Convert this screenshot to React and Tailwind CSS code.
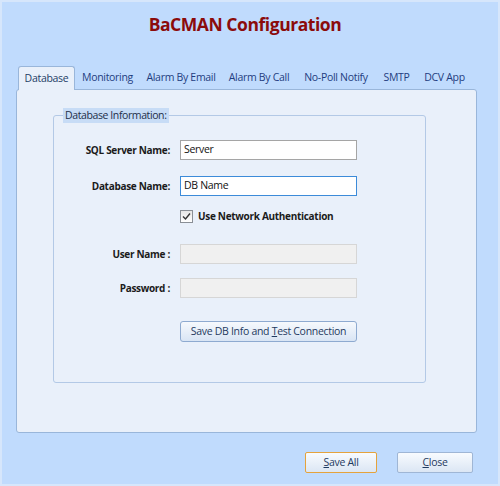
import React from 'react';

const font = { fontFamily: '"Open Sans", "Noto Sans", sans-serif' };

const tabs = [
  { label: 'Monitoring', w: 'w-[65px]' },
  { label: 'Alarm By Email', w: 'w-[82px]' },
  { label: 'Alarm By Call', w: 'w-[74px]' },
  { label: 'No-Poll Notify', w: 'w-[80px]' },
  { label: 'SMTP', w: 'w-[41px]' },
  { label: 'DCV App', w: 'w-[55px]' },
];

// Form row: right aligned label + field
const Row = ({ label, children, className = '' }) => (
  <div className={`flex items-center ${className}`}>
    <div className="w-[117px] pr-[1px] text-right text-[10px] font-bold text-[#1b1b1b] leading-none tracking-[-0.3px]">
      {label}
    </div>
    <div className="ml-[9px] w-[177px]">{children}</div>
  </div>
);

const TextBox = ({ value, focused, disabled }) => (
  <div
    className={`h-[20px] w-full flex items-center px-[3px] text-[10.5px] text-[#111] tracking-[-0.3px] border ${
      disabled
        ? 'bg-[#f0f0f0] border-[#d6d6d6]'
        : focused
        ? 'bg-white border-[#3c8bd9]'
        : 'bg-white border-[#a5a5a5]'
    }`}
  >
    {value}
  </div>
);

export default function App() {
  return (
    <div
      className="w-[500px] h-[486px] bg-[#c0dbfd] border-2 border-[#d6e6fb] flex flex-col overflow-hidden"
      style={font}
    >
      {/* Title */}
      <div className="h-[63px] flex justify-center pt-[14px]">
        <h1 className="text-[17.5px] font-bold text-[#8b0b0b] leading-none tracking-[-0.45px] ml-[-10px]">
          BaCMAN Configuration
        </h1>
      </div>

      {/* Tab strip */}
      <div className="flex items-end h-[24px] ml-[16px]">
        <div className="w-[57px] h-[24px] bg-[#e9f0fa] border border-b-0 border-[#99b6da] rounded-t-[3px] flex items-center justify-center text-[10.5px] text-[#1f3d66] tracking-[-0.3px] relative z-10 mb-[-1px]">
          Database
        </div>
        {tabs.map((t) => (
          <div
            key={t.label}
            className={`${t.w} h-[22px] flex items-center justify-center text-[10.5px] text-[#1f3d80] tracking-[-0.3px] whitespace-nowrap`}
          >
            {t.label}
          </div>
        ))}
      </div>

      {/* Tab panel */}
      <div className="ml-[14px] w-[461px] h-[344px] bg-[#e9f0fa] border border-[#99b6da] rounded-[3px] pt-[25px] pl-[36px]">
        {/* Group box */}
        <div className="relative w-[373px] h-[268px] border border-[#b3c9e6] rounded-[3px]">
          <div className="absolute left-[9px] top-[-8px] h-[15px] px-[2px] bg-[#c7dcf6] text-[10.5px] text-[#1e2f4a] leading-[15px] tracking-[-0.4px]">
            Database Information:
          </div>

          <div className="flex flex-col pt-[24px]">
            <Row label="SQL Server Name:">
              <TextBox value="Server" />
            </Row>
            <Row label="Database Name:" className="mt-[16px]">
              <TextBox value="DB Name" focused />
            </Row>
            <Row label="" className="mt-[10px]">
              <div className="h-[20px] flex items-center">
                <div className="w-[13px] h-[13px] border border-[#8a8f96] bg-gradient-to-b from-[#e6e6e6] to-white flex items-center justify-center">
                  <svg width="11" height="11" viewBox="0 0 11 11">
                    <path d="M2 5.5 L4.5 8 L9 2.5" fill="none" stroke="#333" strokeWidth="1.4" />
                  </svg>
                </div>
                <span className="ml-[5px] text-[10px] font-bold text-[#1b1b1b] tracking-[-0.3px]">
                  Use Network Authentication
                </span>
              </div>
            </Row>
            <Row label="User Name :" className="mt-[18px]">
              <TextBox value="" disabled />
            </Row>
            <Row label="Password :" className="mt-[14px]">
              <TextBox value="" disabled />
            </Row>
            <Row label="" className="mt-[19px]">
              <button className="w-[177px] h-[21px] rounded-[3px] border border-[#8eaad0] bg-gradient-to-b from-[#f6f9fd] to-[#d9e5f4] text-[10.5px] text-[#1f3a60] tracking-[-0.3px] leading-none">
                Save DB Info and <span className="underline">T</span>est Connection
              </button>
            </Row>
          </div>
        </div>
      </div>

      {/* Footer buttons */}
      <div className="flex mt-[19px] ml-[303px] gap-[20px]">
        <button className="w-[72px] h-[21px] rounded-[2px] border border-[#e5a33c] bg-gradient-to-b from-[#f8fbfe] to-[#dbe6f4] text-[10.5px] text-[#1f3a60] tracking-[-0.3px] leading-none">
          <span className="underline">S</span>ave All
        </button>
        <button className="w-[76px] h-[21px] rounded-[2px] border border-[#9fb6d5] bg-gradient-to-b from-[#f8fbfe] to-[#dbe6f4] text-[10.5px] text-[#1f3a60] tracking-[-0.3px] leading-none">
          <span className="underline">C</span>lose
        </button>
      </div>
    </div>
  );
}
